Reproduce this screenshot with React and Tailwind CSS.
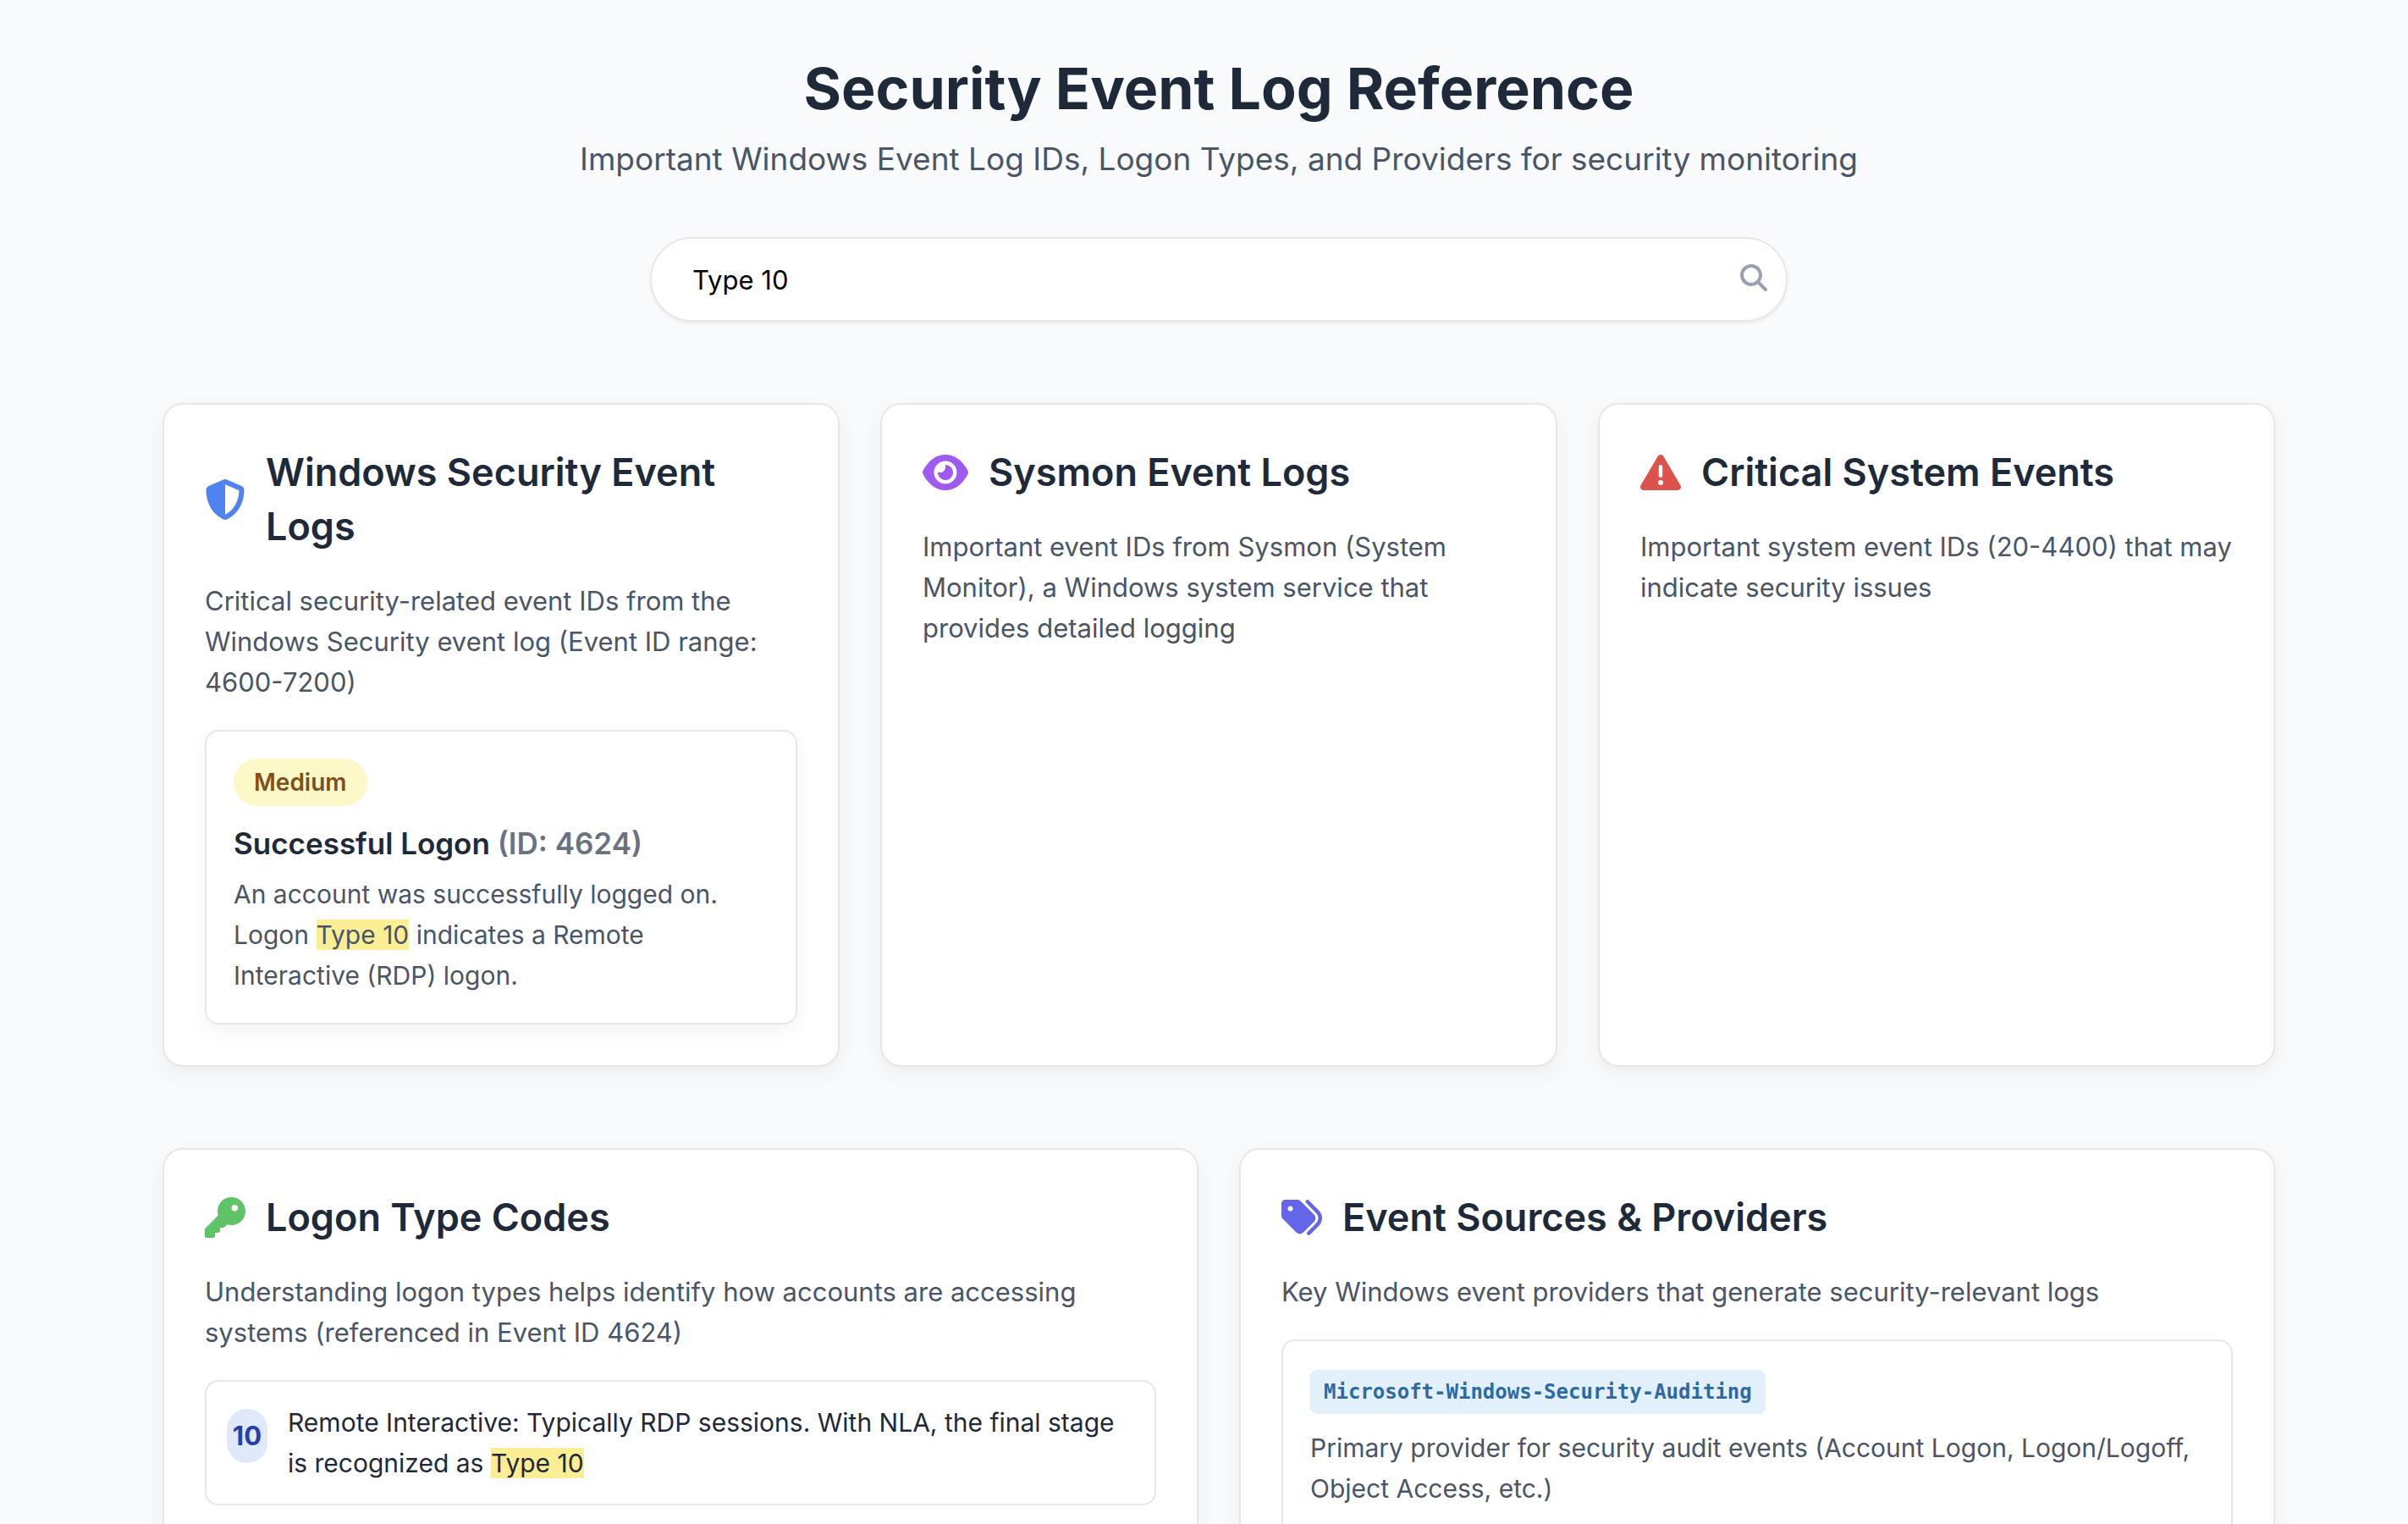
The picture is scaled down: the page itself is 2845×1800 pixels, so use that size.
import { useState } from "react";
import {
  FaEye,
  FaKey,
  FaMagnifyingGlass,
  FaShieldHalved,
  FaTags,
  FaTriangleExclamation,
} from "react-icons/fa6";

function Card({ icon, title, description, children }) {
  return (
    <section className="rounded-3xl border-2 border-gray-200 bg-white p-12 shadow-[0_8px_24px_rgba(0,0,0,0.05)]">
      <h2 className="mb-8 flex items-center gap-6 text-[45px] leading-16 font-semibold text-gray-800">
        {icon}
        <span>{title}</span>
      </h2>
      <p className="text-[31px] leading-12 text-gray-600">{description}</p>
      {children}
    </section>
  );
}

function Highlight({ children }) {
  return <mark className="bg-[#fbee94] text-inherit">{children}</mark>;
}

export default function App() {
  const [query, setQuery] = useState("Type 10");

  return (
    <div className="min-h-screen bg-[#f9fafc] pl-[35px] font-['Inter',sans-serif]">
      <main className="mx-auto max-w-[2560px] px-8 py-16">
        <header className="mb-24 text-center">
          <h1 className="mb-4 text-[68px] leading-20 font-bold text-gray-800">
            Security Event Log Reference
          </h1>
          <p className="mb-16 text-[37px] leading-14 text-gray-600">
            Important Windows Event Log IDs, Logon Types, and Providers for security monitoring
          </p>
          <div className="relative mx-auto max-w-[1344px]">
            <input
              type="text"
              aria-label="Search events"
              value={query}
              onChange={(e) => setQuery(e.target.value)}
              className="block h-[100px] w-full rounded-full border-2 border-gray-200 bg-white pr-24 pl-12 text-[31px] leading-12 text-black shadow-[0_2px_4px_rgba(0,0,0,0.06)] outline-none"
            />
            <FaMagnifyingGlass className="pointer-events-none absolute top-8 right-6 size-8 text-gray-400" />
          </div>
        </header>

        <div className="mb-24 grid grid-cols-3 gap-12">
          <Card
            icon={<FaShieldHalved className="size-12 shrink-0 text-[#4f83f0]" />}
            title="Windows Security Event Logs"
            description="Critical security-related event IDs from the Windows Security event log (Event ID range: 4600-7200)"
          >
            <article className="mt-8 rounded-2xl border-2 border-gray-200 bg-white p-8 shadow-[0_8px_24px_rgba(0,0,0,0.05)]">
              <span className="inline-block rounded-full bg-[#fdf8c8] px-6 py-2 align-top text-[28px] leading-10 font-semibold text-[#7f4f1d]">
                Medium
              </span>
              <h3 className="mt-4 text-[35px] leading-14 font-semibold text-gray-800">
                Successful Logon <span className="text-gray-500">(ID: 4624)</span>
              </h3>
              <p className="mt-2 text-3xl leading-12 text-gray-600">
                An account was successfully logged on. Logon <Highlight>Type 10</Highlight> indicates a
                Remote Interactive (RDP) logon.
              </p>
            </article>
          </Card>
          <Card
            icon={<FaEye className="h-12 w-[54px] shrink-0 text-[#9f5bf0]" />}
            title="Sysmon Event Logs"
            description="Important event IDs from Sysmon (System Monitor), a Windows system service that provides detailed logging"
          />
          <Card
            icon={<FaTriangleExclamation className="size-12 shrink-0 text-[#de524c]" />}
            title="Critical System Events"
            description="Important system event IDs (20-4400) that may indicate security issues"
          />
        </div>

        <div className="grid grid-cols-2 gap-12">
          <Card
            icon={<FaKey className="size-12 shrink-0 text-[#5fc368]" />}
            title="Logon Type Codes"
            description="Understanding logon types helps identify how accounts are accessing systems (referenced in Event ID 4624)"
          >
            <ul className="mt-8">
              <li className="flex items-start gap-6 rounded-2xl border-2 border-gray-200 p-6">
                <span className="mt-2 flex h-16 w-12 shrink-0 items-center justify-center rounded-full bg-[#dfe9fb] text-[31px] font-bold text-[#263fa9]">
                  10
                </span>
                <p className="text-3xl leading-12 text-gray-800">
                  Remote Interactive: Typically RDP sessions. With NLA, the final stage is recognized
                  as <Highlight>Type 10</Highlight>
                </p>
              </li>
            </ul>
          </Card>
          <Card
            icon={<FaTags className="size-12 shrink-0 text-[#6466ea]" />}
            title="Event Sources & Providers"
            description="Key Windows event providers that generate security-relevant logs"
          >
            <ul className="mt-8">
              <li className="rounded-2xl border-2 border-gray-200 p-8">
                <code className="mt-[2px] inline-block rounded-lg bg-[#e2f0fb] px-4 py-2 align-top font-['DejaVu_Sans_Mono',monospace] text-2xl leading-9 font-bold text-[#2d6aa3]">
                  Microsoft-Windows-Security-Auditing
                </code>
                <p className="mt-4 text-3xl leading-12 text-gray-600">
                  Primary provider for security audit events (Account Logon, Logon/Logoff, Object
                  Access, etc.)
                </p>
              </li>
            </ul>
          </Card>
        </div>
      </main>
    </div>
  );
}
